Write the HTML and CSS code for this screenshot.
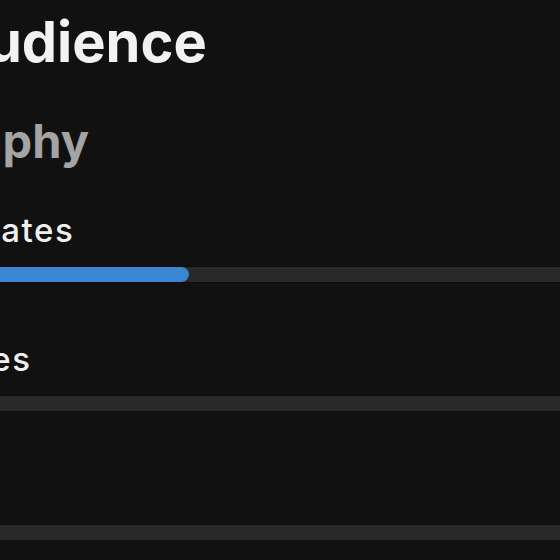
FILE: index.html
```html
<!DOCTYPE html>
<html lang="en">
<head>
<meta charset="utf-8">
<title>Your Audience</title>
<link rel="stylesheet" href="styles.css">
</head>
<body>
<main class="screen">
  <h1 class="title">Your Audience</h1>
  <h2 class="section">Geography</h2>
  <ul class="list">
    <li class="row">
      <span class="label">United States</span>
      <div class="track"><div class="fill" style="width:48%"></div></div>
    </li>
    <li class="row">
      <span class="label">Philippines</span>
      <div class="track"><div class="fill" style="width:12%"></div></div>
    </li>
    <li class="row">
      <span class="label">Canada</span>
      <div class="track"><div class="fill" style="width:8%"></div></div>
    </li>
  </ul>
</main>
</body>
</html>
```

FILE: styles.css
```css
html, body {
  margin: 0;
  padding: 0;
  background: #111111;
  overflow: hidden;
}

body {
  font-family: Inter, "Liberation Sans", sans-serif;
  color: #f2f2f2;
}

.screen {
  width: 800px;
  margin-left: -195px;
  padding-top: 14px;
  display: flex;
  flex-direction: column;
}

.title {
  margin: 0;
  font-size: 56px;
  line-height: 1;
  font-weight: 700;
  color: #f2f2f2;
}

.section {
  margin: 47px 0 0 30px;
  font-size: 47px;
  line-height: 1;
  font-weight: 700;
  color: #a4a4a4;
}

.list {
  list-style: none;
  margin: 50px 0 0;
  padding: 0;
  display: flex;
  flex-direction: column;
  gap: 61px;
}

.row {
  display: flex;
  flex-direction: column;
  gap: 20px;
}

.label {
  padding-left: 37px;
  font-size: 33px;
  line-height: 1;
  font-weight: 500;
  letter-spacing: 1.6px;
  color: #f0f0f0;
}

.track {
  height: 15px;
  border-radius: 8px;
  background: #292929;
  box-shadow: 0 0 0 1px #0c0c0c;
}

.fill {
  height: 100%;
  border-radius: 8px;
  background: #3a86d2;
}
```
